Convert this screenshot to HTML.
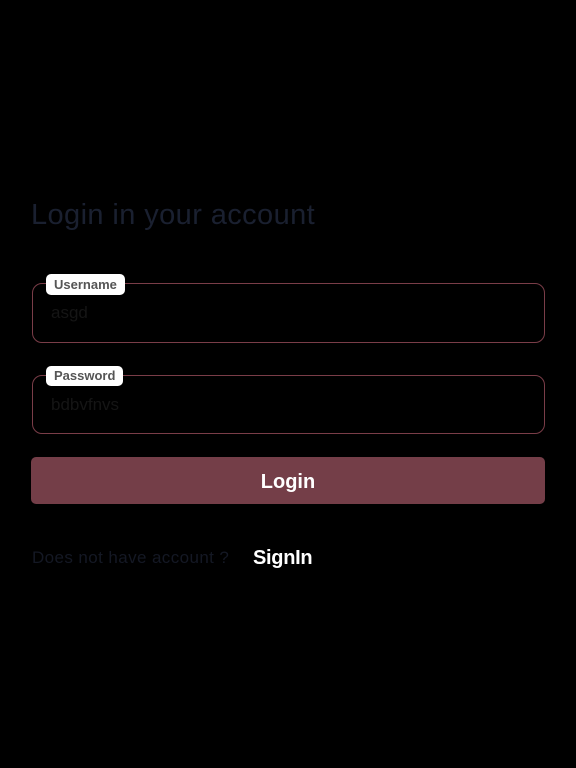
<!DOCTYPE html>
<html><head><style>
body{margin:0;background:#000;width:576px;height:768px;position:relative;font-family:"Liberation Sans",sans-serif;overflow:hidden}
.t{position:absolute;left:31px;top:199px;font-size:29px;letter-spacing:0.4px;color:#1a2030;white-space:nowrap}
.box{position:absolute;left:32px;width:511px;border:1px solid #7a3d48;border-radius:10px}
.lab{position:absolute;left:46px;background:#fff;border-radius:5px;color:#555;font-weight:bold;font-size:13px;line-height:21px;padding:0 8px}
.val{position:absolute;left:51px;font-size:17px;color:#151515}
.btn{position:absolute;left:31px;top:457px;width:514px;height:47px;background:#743e48;border-radius:5px;color:#fff;font-weight:bold;font-size:20px;text-align:center;line-height:51px}
.q{position:absolute;left:32px;top:548px;font-size:17px;letter-spacing:0.4px;color:#141824;white-space:nowrap}
.s{position:absolute;left:253px;top:547px;font-size:20px;font-weight:bold;color:#fff;letter-spacing:-0.3px}
</style></head><body>
<div class="t">Login in your account</div>
<div class="box" style="top:283px;height:58px"></div>
<div class="lab" style="top:274px">Username</div>
<div class="val" style="top:303px">asgd</div>
<div class="box" style="top:375px;height:57px"></div>
<div class="lab" style="top:366px;line-height:20px">Password</div>
<div class="val" style="top:395px">bdbvfnvs</div>
<div class="btn">Login</div>
<div class="q">Does not have account ?</div>
<div class="s">SignIn</div>
</body></html>
